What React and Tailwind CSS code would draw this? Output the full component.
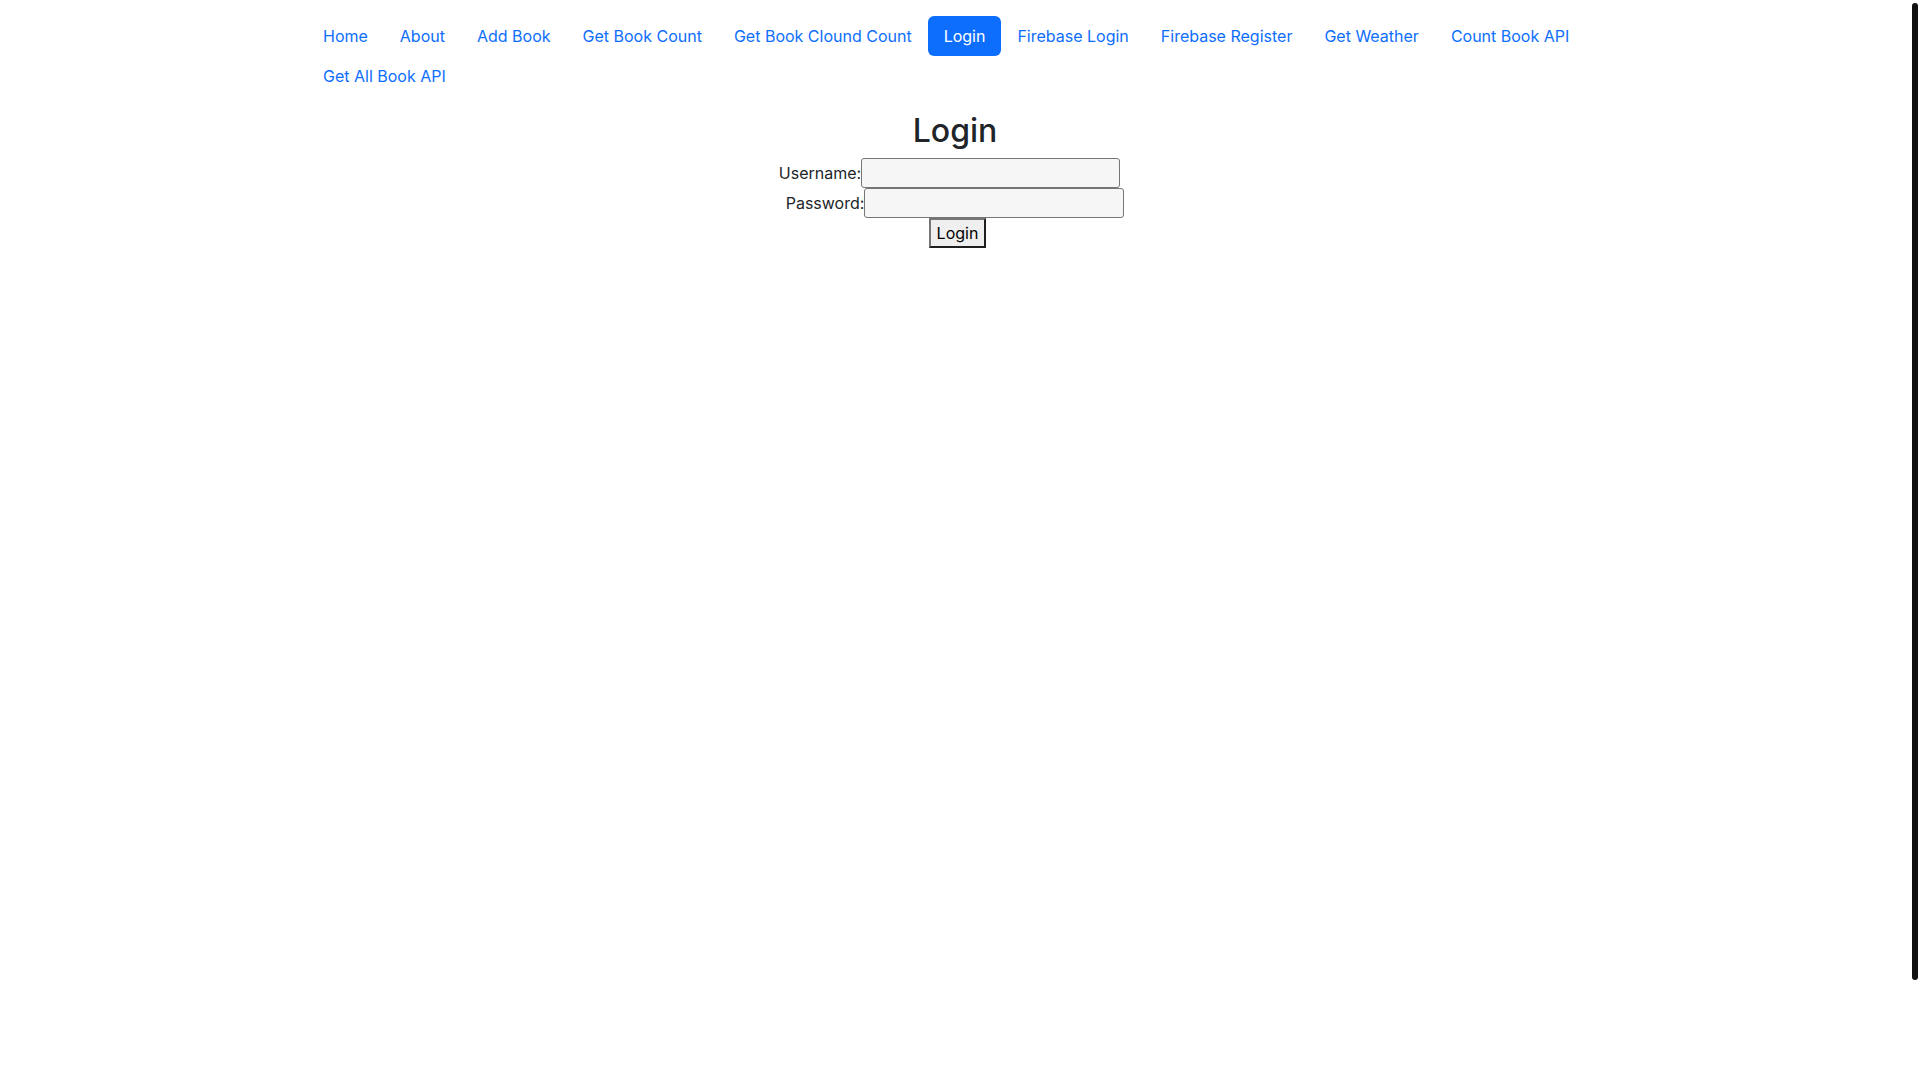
import { useState } from "react";

const links = [
  "Home",
  "About",
  "Add Book",
  "Get Book Count",
  "Get Book Clound Count",
  "Login",
  "Firebase Login",
  "Firebase Register",
  "Get Weather",
  "Count Book API",
  "Get All Book API",
];

export default function App() {
  const [active, setActive] = useState("Login");
  const [username, setUsername] = useState("");
  const [password, setPassword] = useState("");

  return (
    <div className="flex h-screen overflow-hidden bg-white text-[#212529] text-base leading-6 [font-family:Inter,'Noto_Sans',sans-serif]">
      <div className="flex-1">
        <div className="mx-auto max-w-[1320px] px-3 pt-4">
          {/* Nav pills */}
          <ul className="flex flex-wrap">
            {links.map((l) => (
              <li key={l}>
                <a
                  href="#"
                  onClick={(e) => {
                    e.preventDefault();
                    setActive(l);
                  }}
                  className={`block px-4 py-2 rounded-[6px] ${
                    active === l ? "bg-[#0d6efd] text-white" : "text-[#0d6efd]"
                  }`}
                >
                  {l}
                </a>
              </li>
            ))}
          </ul>

          {/* Login form */}
          <div className="mt-4 text-center">
            <h2 className="text-[32px] leading-[1.2] font-medium mb-2">Login</h2>
            <form onSubmit={(e) => e.preventDefault()}>
              <div className="flex h-[30px] items-center justify-center pr-[11px]">
                <label htmlFor="username">Username:</label>
                <input
                  id="username"
                  value={username}
                  onChange={(e) => setUsername(e.target.value)}
                  className="h-[30px] w-[259px] rounded-[3px] border border-[#767676] bg-[#f6f6f6] px-[2px] outline-none"
                />
              </div>
              <div className="flex h-[30px] items-center justify-center">
                <label htmlFor="password">Password:</label>
                <input
                  id="password"
                  type="password"
                  value={password}
                  onChange={(e) => setPassword(e.target.value)}
                  className="h-[30px] w-[260px] rounded-[3px] border border-[#767676] bg-[#f6f6f6] px-[2px] outline-none"
                />
              </div>
              <div className="flex h-[30px] items-center justify-center pl-[5px]">
                <button
                  type="submit"
                  className="h-[30px] bg-[#efefef] px-[6px] py-px text-black border-2 border-t-[#767676] border-l-[#767676] border-b-[#1f1f1f] border-r-[#1f1f1f]"
                >
                  Login
                </button>
              </div>
            </form>
          </div>
        </div>
      </div>

      {/* scrollbar */}
      <div className="w-[10px] shrink-0 px-[2px] pt-[3px]">
        <div className="h-[977px] w-[6px] rounded-full bg-[#111111]" />
      </div>
    </div>
  );
}
